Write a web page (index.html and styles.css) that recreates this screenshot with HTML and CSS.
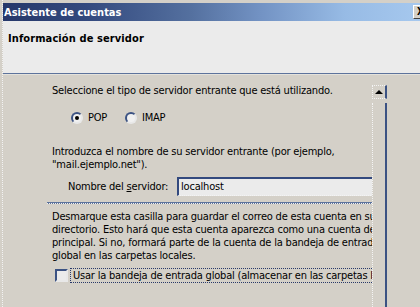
FILE: index.html
```html
<!DOCTYPE html>
<html lang="es">
<head>
<meta charset="utf-8">
<title>Asistente de cuentas</title>
<link rel="stylesheet" href="styles.css">
</head>
<body>
<div class="window">
  <div class="frame">
    <div class="titlebar">
      <span class="title">Asistente de cuentas</span>
      <span class="close">X</span>
    </div>
    <div class="header">
      <h1 class="heading">Información de servidor</h1>
    </div>
    <div class="body">
      <div class="pane">
        <p class="text first">Seleccione el tipo de servidor entrante que está utilizando.</p>
        <div class="radios">
          <label class="radio"><span class="rbox checked"></span><span class="rlabel">POP</span></label>
          <label class="radio"><span class="rbox"></span><span class="rlabel">IMAP</span></label>
        </div>
        <p class="text para">Introduzca el nombre de su servidor entrante (por ejemplo,<br>"mail.ejemplo.net").</p>
        <div class="field">
          <span class="flabel">Nombre del <u>s</u>ervidor:</span>
          <span class="input">localhost</span>
        </div>
        <div class="sep"></div>
        <p class="text para2">Desmarque esta casilla para guardar el correo de esta cuenta en su<br>directorio. Esto hará que esta cuenta aparezca como una cuenta de<br>principal. Si no, formará parte de la cuenta de la bandeja de entrada<br>global en las carpetas locales.</p>
        <div class="check">
          <span class="cbox"></span>
          <span class="clabel">Usar la bandeja de entrada global (almacenar en las carpetas locales)</span>
        </div>
      </div>
      <div class="scrollbar">
        <div class="sbtn"><span class="arrow"></span></div>
        <div class="track"></div>
      </div>
      <div class="rest"></div>
    </div>
  </div>
</div>
</body>
</html>
```

FILE: styles.css
```css
html, body {
  margin: 0;
  padding: 0;
}
body {
  width: 420px;
  height: 307px;
  overflow: hidden;
  background: #d4d0c8;
  font-family: "DejaVu Sans Condensed", "Liberation Sans", sans-serif;
  font-size: 11px;
  line-height: 13px;
  color: #000;
}
.window {
  width: 420px;
  height: 307px;
  overflow: hidden;
  background: #d4d0c8;
  padding-left: 2px;
  box-sizing: border-box;
}
.frame {
  height: 100%;
  padding-top: 3px;
  box-sizing: border-box;
  border-left: 1px dotted #f2f2f2;
  display: flex;
  flex-direction: column;
}
.titlebar {
  height: 18px;
  display: flex;
  align-items: center;
  background: linear-gradient(to right, #26386a 0%, #33497e 20%, #54709f 45%, #7393c4 62%, #97bbe5 82%, #a6c8ee 100%);
  padding-left: 1px;
}
.title {
  color: #fff;
  font-weight: bold;
}
.close {
  margin-left: auto;
  margin-right: -9px;
  width: 16px;
  height: 14px;
  background: #d4d0c8;
  border-top: 1px solid #fff;
  border-left: 1px solid #fff;
  border-bottom: 1px solid #404040;
  box-sizing: border-box;
  font-weight: bold;
  font-size: 10px;
  line-height: 12px;
  padding-left: 3px;
  color: #000;
}
.header {
  height: 53px;
  background: #ebebeb;
  border-bottom: 1px solid #5d739c;
  box-sizing: border-box;
  padding: 11px 0 0 5px;
}
.heading {
  margin: 0;
  font-size: 11px;
  line-height: 13px;
  font-weight: bold;
  letter-spacing: 0.1px;
}
.body {
  flex: 1;
  display: flex;
  border-top: 1px solid #e4e2dc;
}
.pane {
  width: 369px;
  flex: none;
  overflow: hidden;
  white-space: nowrap;
  padding: 9px 0 0 49px;
  box-sizing: border-box;
  letter-spacing: -0.2px;
}
.text {
  margin: 0;
}
.radios {
  display: flex;
  height: 17px;
  align-items: center;
  margin: 12px 0 0 19px;
}
.radio {
  display: flex;
  align-items: center;
  width: 54px;
}
.rbox {
  width: 12px;
  height: 12px;
  box-sizing: border-box;
  border-radius: 50%;
  border: 2px solid;
  border-color: #3b5283 #e8e8e8 #e8e8e8 #3b5283;
  background: #f0f0f0;
  margin-right: 5px;
  position: relative;
}
.rbox.checked::after {
  content: "";
  position: absolute;
  left: 2px;
  top: 2px;
  width: 4px;
  height: 4px;
  border-radius: 50%;
  background: #000;
}
.para {
  margin-top: 19px;
}
.field {
  display: flex;
  align-items: center;
  height: 19px;
  margin: 6px 0 0 16px;
}
.flabel {
  width: 109px;
  flex: none;
}
.input {
  height: 19px;
  width: 260px;
  flex: none;
  box-sizing: border-box;
  background: #ebebeb;
  border-top: 2px solid #33497e;
  border-left: 2px solid #33497e;
  border-bottom: 1px dotted #f4f4f4;
  padding: 1px 0 0 2px;
  line-height: 14px;
}
.sep {
  height: 1px;
  margin: 6px 0 0 -5px;
  background: #5d739c;
  border-bottom: 1px dotted #f0f0f0;
}
.para2 {
  margin-top: 6px;
}
.check {
  display: flex;
  align-items: center;
  height: 15px;
  margin: 6px 0 0 3px;
}
.cbox {
  width: 13px;
  height: 13px;
  flex: none;
  box-sizing: border-box;
  border: 2px solid;
  border-color: #3b5283 #e8e8e8 #e8e8e8 #3b5283;
  background: #ebebeb;
  margin-right: 2px;
}
.clabel {
  border: 1px dotted #2a3a6a;
  padding: 0 2px 0 2px;
  line-height: 13px;
}
.scrollbar {
  width: 15px;
  flex: none;
  display: flex;
  flex-direction: column;
  padding-top: 10px;
}
.sbtn {
  height: 14px;
  box-sizing: border-box;
  border-top: 1px dotted #f4f4f4;
  border-left: 1px dotted #f4f4f4;
  border-right: 2px solid #3b5283;
  border-bottom: 1px dotted #f4f4f4;
  display: flex;
  align-items: center;
  justify-content: center;
}
.arrow {
  width: 0;
  height: 0;
  border-left: 4px solid transparent;
  border-right: 4px solid transparent;
  border-bottom: 4px solid #000;
}
.track {
  flex: 1;
  margin-top: 4px;
  border-left: 1px dotted #f4f4f4;
  border-right: 2px solid #3b5283;
}
.rest {
  flex: 1;
}
```
